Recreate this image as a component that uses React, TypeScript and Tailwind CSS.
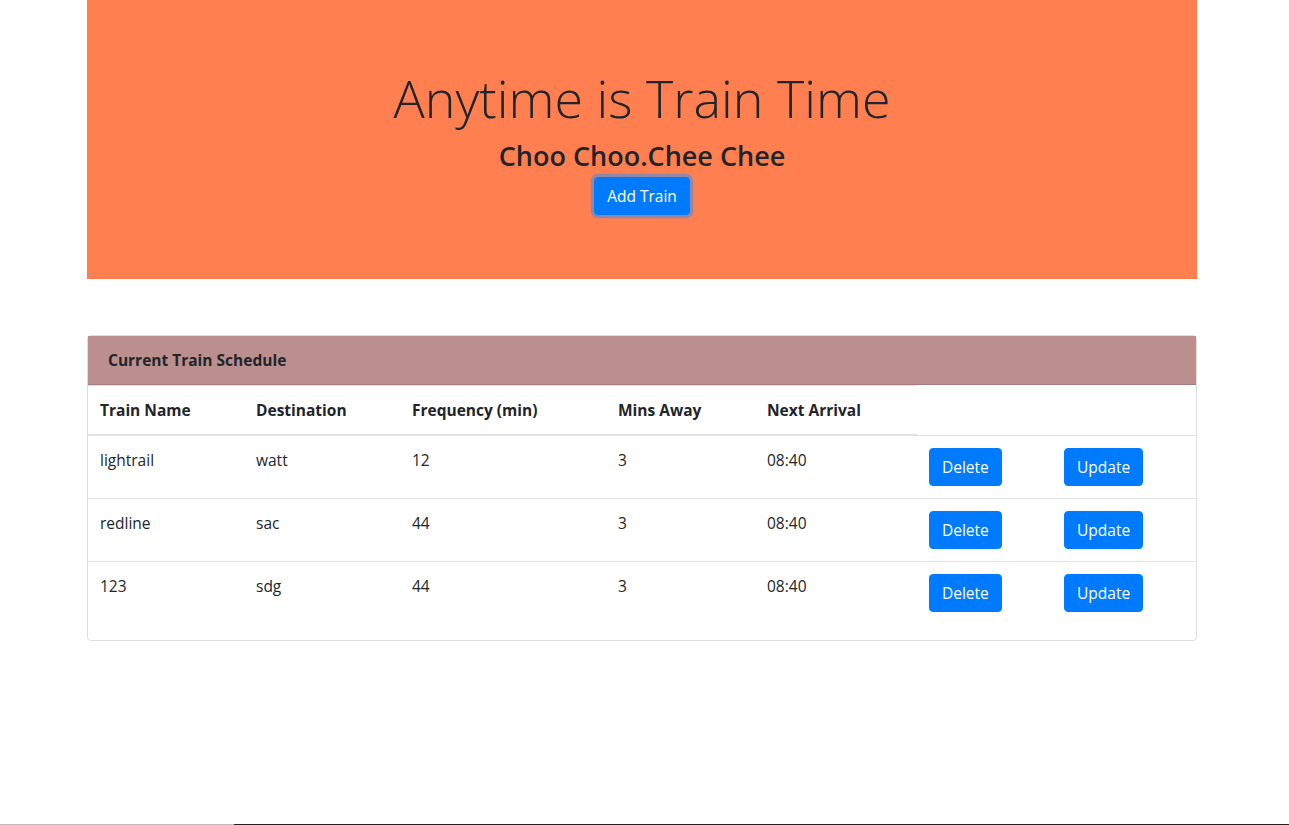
import React from 'react';

interface Train {
  name: string;
  destination: string;
  frequency: number;
  minsAway: number;
  nextArrival: string;
}

const trains: Train[] = [
  { name: 'lightrail', destination: 'watt', frequency: 12, minsAway: 3, nextArrival: '08:40' },
  { name: 'redline', destination: 'sac', frequency: 44, minsAway: 3, nextArrival: '08:40' },
  { name: '123', destination: 'sdg', frequency: 44, minsAway: 3, nextArrival: '08:40' },
];

const headers = [
  { label: 'Train Name', w: 'w-[156px]' },
  { label: 'Destination', w: 'w-[156px]' },
  { label: 'Frequency (min)', w: 'w-[206px]' },
  { label: 'Mins Away', w: 'w-[149px]' },
  { label: 'Next Arrival', w: 'w-[162px]' },
];

const btn =
  'inline-block rounded-[4px] bg-[#007bff] px-3 py-1.5 text-[15.5px] leading-6 text-white border border-[#007bff]';

const TrainRow: React.FC<{ train: Train }> = ({ train }) => {
  const cell = 'border-t border-[#dee2e6] p-3 align-top';
  return (
    <tr>
      <td className={cell}>{train.name}</td>
      <td className={cell}>{train.destination}</td>
      <td className={cell}>{train.frequency}</td>
      <td className={cell}>{train.minsAway}</td>
      <td className={cell}>{train.nextArrival}</td>
      <td className={`${cell} w-[135px]`}>
        <button className={btn}>Delete</button>
      </td>
      <td className={cell}>
        <button className={btn}>Update</button>
      </td>
    </tr>
  );
};

export default function App() {
  return (
    <div
      className="min-h-[825px] bg-white text-[#212529] text-base leading-6"
      style={{ fontFamily: '"Segoe UI", "Open Sans", "Noto Sans", sans-serif' }}
    >
      <div className="ml-[87px] w-[1110px]">
        <div className="flex flex-col items-center bg-[#ff7f50] pt-16 pb-16">
          <h1 className="mb-2 text-[52px] font-light leading-[67px]">Anytime is Train Time</h1>
          <h3 className="mb-1 text-[27px] font-semibold leading-[34px]">Choo Choo.Chee Chee</h3>
          <button className={`${btn} shadow-[0_0_0_3.2px_rgba(38,143,255,0.5)]`}>Add Train</button>
        </div>

        <div className="mt-14 rounded-[4px] border border-[rgba(0,0,0,0.125)]">
          <div className="border-b border-[rgba(0,0,0,0.125)] bg-[#bc8f8f] px-5 py-3 text-[15.5px] font-bold">
            Current Train Schedule
          </div>
          <table className="mb-4 w-full border-collapse text-left text-[15.5px]">
            <thead>
              <tr>
                {headers.map((h) => (
                  <th
                    key={h.label}
                    className={`${h.w} border-t border-b-2 border-[#dee2e6] p-3 align-bottom font-bold`}
                  >
                    {h.label}
                  </th>
                ))}
              </tr>
            </thead>
            <tbody>
              {trains.map((t, i) => (
                <TrainRow key={i} train={t} />
              ))}
            </tbody>
          </table>
        </div>
      </div>

      <div className="fixed inset-x-0 bottom-0 flex h-px">
        <div className="w-[234px] bg-[#bdbdbd]" />
        <div className="flex-1 bg-[#222222]" />
      </div>
    </div>
  );
}
